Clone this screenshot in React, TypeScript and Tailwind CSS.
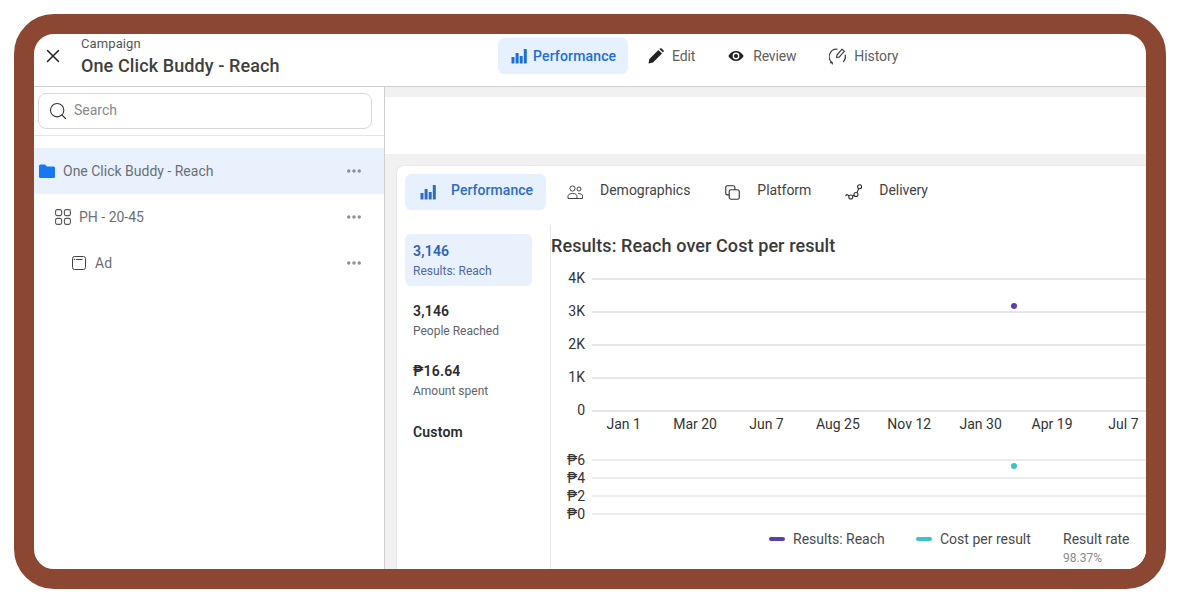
import React from "react";
import { X, Search, MoreHorizontal } from "lucide-react";

const BarsIcon = ({ className }: { className?: string }) => (
  <svg viewBox="0 0 16 16" className={className} fill="currentColor">
    <rect x="0.5" y="9" width="3" height="6.5" rx="0.4" />
    <rect x="4.6" y="5" width="3" height="10.5" rx="0.4" />
    <rect x="8.7" y="8" width="3" height="7.5" rx="0.4" />
    <rect x="12.8" y="1" width="3" height="14.5" rx="0.4" />
  </svg>
);

const PencilIcon = () => (
  <svg viewBox="0 0 16 16" className="w-4 h-4" fill="#222">
    <path d="M0.5 15.5 L1.4 11 L10.4 2 L14 5.6 L5 14.6 Z" />
    <path d="M11.4 1 L12.4 0.3 Q13 0 13.6 0.4 L15.6 2.4 Q16 3 15.7 3.6 L15 4.6 Z" />
  </svg>
);

const EyeIcon = () => (
  <svg viewBox="0 0 16 16" className="w-4 h-4">
    <path d="M0.3 8 Q3.5 3 8 3 Q12.5 3 15.7 8 Q12.5 13 8 13 Q3.5 13 0.3 8 Z" fill="#222" />
    <circle cx="8" cy="8" r="3.4" fill="#fff" />
    <circle cx="8" cy="8" r="2.1" fill="#222" />
  </svg>
);

const HistoryIcon = () => (
  <svg viewBox="0 0 18 18" className="w-[18px] h-[18px]" fill="none" stroke="#444" strokeWidth="1.2" strokeLinecap="round" strokeLinejoin="round">
    <path d="M3 15.5 A7.5 7.5 0 0 1 8 2.2" />
    <path d="M3 15.5 L1.5 15.6 M3 15.5 L3.4 17" />
    <path d="M16.3 8 A7.5 7.5 0 0 1 14.5 14.6" />
    <path d="M7.5 10.5 L8 8 L13 2.2 L15.4 4.2 L10.2 10.2 Z" />
  </svg>
);

const FolderIcon = () => (
  <svg viewBox="0 0 16 14" className="w-4 h-[14px]" fill="#1877f2">
    <path d="M1.5 0.5 H6 L8 2.5 H14.5 Q16 2.5 16 4 V12.5 Q16 14 14.5 14 H1.5 Q0 14 0 12.5 V2 Q0 0.5 1.5 0.5 Z" />
  </svg>
);

const GridIcon = () => (
  <svg viewBox="0 0 16 16" className="w-4 h-4" fill="none" stroke="#555" strokeWidth="1.1">
    <rect x="0.6" y="0.6" width="6" height="6" rx="1.6" />
    <rect x="9.4" y="0.6" width="6" height="6" rx="1.6" />
    <rect x="0.6" y="9.4" width="6" height="6" rx="1.6" />
    <rect x="9.4" y="9.4" width="6" height="6" rx="1.6" />
  </svg>
);

const AdIcon = () => (
  <svg viewBox="0 0 14 14" className="w-[14px] h-[14px]" fill="none" stroke="#444" strokeWidth="1">
    <rect x="0.5" y="0.5" width="13" height="13" rx="2" />
    <path d="M4 3.5 H10.5" />
    <circle cx="2.4" cy="3.5" r="0.4" fill="#444" />
  </svg>
);

const PeopleIcon = () => (
  <svg viewBox="0 0 16 16" className="w-4 h-4" fill="none" stroke="#444" strokeWidth="1">
    <circle cx="5.5" cy="4.5" r="2.6" />
    <circle cx="12" cy="5" r="2" />
    <path d="M1 14.5 V12.5 Q1 9.5 5.5 9.5 Q10 9.5 10 12.5 V14.5 Z" />
    <path d="M11 9.6 Q15.5 9.4 15.5 12.2 V14.5 H10" />
  </svg>
);

const PlatformIcon = () => (
  <svg viewBox="0 0 16 16" className="w-[15px] h-[15px]" fill="none" stroke="#333" strokeWidth="1.2">
    <path d="M4.5 10.5 H2.5 Q0.8 10.5 0.8 8.8 V2.5 Q0.8 0.8 2.5 0.8 H9 Q10.5 0.8 10.5 2.5 V5" />
    <rect x="4.5" y="5" width="10.7" height="10.2" rx="2" />
  </svg>
);

const DeliveryIcon = () => (
  <svg viewBox="0 0 17 16" className="w-[17px] h-4" fill="none" stroke="#333" strokeWidth="1.1">
    <circle cx="5.8" cy="13" r="2" />
    <circle cx="11" cy="10.5" r="2" />
    <circle cx="14.6" cy="2.8" r="2" />
    <path d="M0.5 12 L2 10.4 L4.2 12 M7.6 12.2 L9.2 11.3 M11.9 8.7 L13.8 4.6" />
  </svg>
);

const treeRows = [
  { label: "One Click Buddy - Reach", pad: "pl-[5px]", gap: "gap-2", active: true, icon: <FolderIcon /> },
  { label: "PH - 20-45", pad: "pl-[21px]", gap: "gap-2", active: false, icon: <GridIcon /> },
  { label: "Ad", pad: "pl-[38px]", gap: "gap-[9px]", active: false, icon: <AdIcon /> },
];

const metrics = [
  { value: "3,146", label: "Results: Reach", active: true },
  { value: "3,146", label: "People Reached", active: false },
  { value: "₱16.64", label: "Amount spent", active: false },
];

const topAxis = ["4K", "3K", "2K", "1K", "0"];
const months = ["Jan 1", "Mar 20", "Jun 7", "Aug 25", "Nov 12", "Jan 30", "Apr 19", "Jul 7"];
const bottomAxis = ["₱6", "₱4", "₱2", "₱0"];

export default function App() {
  return (
    <div className="h-[603px] w-[1180px] bg-white p-[14px] font-['Roboto',sans-serif]">
      <div className="h-full border-[20px] border-[#8b4731] rounded-[40px] overflow-hidden bg-white flex flex-col">
        {/* header */}
        <div className="h-[53px] shrink-0 flex items-start border-b border-[#cfcfcf]">
          <div className="w-[464px] shrink-0 flex items-start self-stretch">
            <div className="w-[47px] flex justify-center pt-[11px] -ml-[5px] mr-[5px]">
              <X size={22} strokeWidth={1.6} className="text-[#222]" />
            </div>
            <div>
              <div className="text-[13px] leading-[16px] mt-[2px] text-[#555] tracking-[0.1px]">Campaign</div>
              <div className="text-[18px] leading-[22px] mt-[3px] font-medium text-[#3f3f3f] tracking-[0.1px]">One Click Buddy - Reach</div>
            </div>
          </div>
          <div className="flex items-center mt-1">
            <div className="h-9 w-[130px] rounded-md bg-[#e7f1fd] flex items-center pl-[13px] gap-[6px] text-[#1d6fd6]">
              <BarsIcon className="w-4 h-4" />
              <span className="text-[14px] font-medium tracking-[0.15px]">Performance</span>
            </div>
            <div className="flex items-center gap-2 ml-5 text-[14px] text-[#606060]"><PencilIcon /><span className="-tracking-[0.1px]">Edit</span></div>
            <div className="flex items-center gap-[9px] ml-[33px] text-[14px] text-[#606060]"><EyeIcon /><span className="-tracking-[0.2px]">Review</span></div>
            <div className="flex items-center gap-[7px] ml-[33px] text-[14px] text-[#606060]"><HistoryIcon /><span className="-tracking-[0.05px]">History</span></div>
          </div>
        </div>

        <div className="flex flex-1 min-h-0">
          {/* sidebar */}
          <div className="w-[351px] shrink-0 border-r border-[#cfcfcf]">
            <div className="h-[49px] border-b border-[#e5e5e5] pt-[6px] pl-1 pr-3">
              <div className="h-9 border border-[#d8d8d8] rounded-lg flex items-center pl-[9px] gap-[6px]">
                <Search size={20} strokeWidth={1.3} className="text-[#333]" />
                <span className="text-[14px] text-[#8a8a8a] -mt-[1px]">Search</span>
              </div>
            </div>
            <div className="mt-3">
              {treeRows.map((row) => (
                <div key={row.label} className={`h-[46px] flex items-center pr-[21px] ${row.pad} ${row.active ? "bg-[#e9f1fd]" : ""}`}>
                  <div className={`flex items-center flex-1 ${row.gap}`}>
                    {row.icon}
                    <span className="text-[14px] text-[#6b6f76]">{row.label}</span>
                  </div>
                  <MoreHorizontal size={18} strokeWidth={2.6} className="text-[#8a8d91]" />
                </div>
              ))}
            </div>
          </div>

          {/* main */}
          <div className="flex-1 min-w-0 flex flex-col bg-[#f1f1f1]">
            <div className="h-[57px] mt-[10px] shrink-0 bg-white" />
            <div className="flex-1 ml-[11px] mt-[11px] bg-white rounded-tl-lg border-l border-t border-[#e8e8e8] pl-2 pt-2 min-h-0">
              {/* tabs */}
              <div className="flex items-center h-9">
                <div className="h-9 w-[141px] rounded-md bg-[#e7f1fd] flex items-center pl-[15px] gap-[15px] text-[#2d6cc4]">
                  <BarsIcon className="w-4 h-4" />
                  <span className="text-[14px] font-medium tracking-[0.05px] -mt-[3px]">Performance</span>
                </div>
                <div className="flex items-center gap-[17px] ml-[21px] text-[14px] text-[#444]"><PeopleIcon /><span className="-mt-[3px]">Demographics</span></div>
                <div className="flex items-center gap-[17px] ml-[35px] text-[14px] text-[#444]"><PlatformIcon /><span className="-mt-[3px] -tracking-[0.05px]">Platform</span></div>
                <div className="flex items-center gap-[17px] ml-[34px] text-[14px] text-[#444]"><DeliveryIcon /><span className="-mt-[3px] -tracking-[0.05px]">Delivery</span></div>
              </div>

              <div className="flex mt-[15px]">
                {/* metrics */}
                <div className="w-[145px] shrink-0 pt-[9px]">
                  {metrics.map((m) => (
                    <div key={m.label} className={`w-[127px] h-[52px] mb-2 rounded-md pl-2 pt-[9px] ${m.active ? "bg-[#e9f1fd]" : ""}`}>
                      <div className={`text-[14px] leading-[17px] font-semibold tracking-[0.2px] ${m.active ? "text-[#2f62b5]" : "text-[#2b2b2b]"}`}>{m.value}</div>
                      <div className={`text-[12px] leading-[14px] mt-[4px] ${m.active ? "text-[#4f6aa0]" : "text-[#60646c]"}`}>{m.label}</div>
                    </div>
                  ))}
                  <div className="pl-2 pt-[10px] text-[14px] leading-[17px] font-semibold text-[#2b2b2b] tracking-[0.2px]">Custom</div>
                </div>

                {/* chart */}
                <div className="relative flex-1 min-w-0 h-[360px] border-l border-[#e8e8e8]">
                  <div className="text-[18px] leading-[22px] mt-[10px] font-medium text-[#3a3a3a] tracking-[0.09px]">Results: Reach over Cost per result</div>
                  <div className="mt-[5px]">
                    {topAxis.map((t) => (
                      <div key={t} className="h-[33px] flex items-center">
                        <span className="w-[34px] text-right text-[14px] text-[#333]">{t}</span>
                        <div className="flex-1 h-[2px] ml-[7px] bg-[#e6e6e6]" />
                      </div>
                    ))}
                  </div>
                  <div className="flex pl-[37px] -mt-[12px]">
                    {months.map((m) => (
                      <span key={m} className="w-[71.4px] shrink-0 text-center text-[14px] leading-[18px] text-[#333]">{m}</span>
                    ))}
                  </div>
                  <div className="mt-[18px]">
                    {bottomAxis.map((t) => (
                      <div key={t} className="h-[18px] flex items-center">
                        <span className="w-[34px] text-right text-[14px] text-[#333]">{t}</span>
                        <div className="flex-1 h-[2px] ml-[7px] bg-[#ececec]" />
                      </div>
                    ))}
                  </div>
                  <div className="flex items-start mt-[7px] pl-[218px] text-[14px] leading-[18px] text-[#4a4a4a]">
                    <div className="flex items-center gap-2 w-[147px]">
                      <span className="w-4 h-[4px] rounded-full bg-[#5b3fa8]" />
                      <span>Results: Reach</span>
                    </div>
                    <div className="flex items-center gap-2 w-[147px]">
                      <span className="w-4 h-[4px] rounded-full bg-[#3cc4c4]" />
                      <span>Cost per result</span>
                    </div>
                    <div>
                      <div>Result rate</div>
                      <div className="text-[12px] leading-[14px] mt-[3px] text-[#8a8a8a]">98.37%</div>
                    </div>
                  </div>
                  <span className="absolute left-[460px] top-[78px] w-[6px] h-[6px] rounded-full bg-[#5b3fa8]" />
                  <span className="absolute left-[460px] top-[238px] w-[6px] h-[6px] rounded-full bg-[#3cc4c4]" />
                </div>
              </div>
            </div>
          </div>
        </div>
      </div>
    </div>
  );
}
